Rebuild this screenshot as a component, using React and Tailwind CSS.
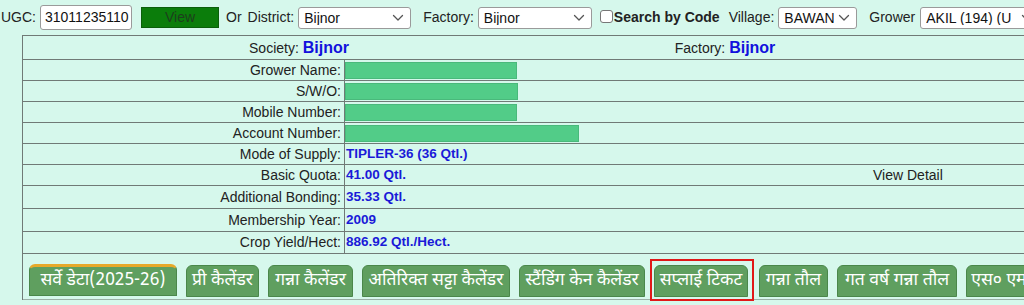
import React from "react";

const Chevron = () => (
  <svg width="12" height="8" viewBox="0 0 12 8" className="shrink-0">
    <path d="M1.5 1.5 L6 6 L10.5 1.5" fill="none" stroke="#555" strokeWidth="1.3" strokeLinecap="round" strokeLinejoin="round" />
  </svg>
);

const Select = ({ w, text }) => (
  <div
    className={`h-[22px] ${w} shrink-0 bg-white border border-[#9a9a9a] rounded-[3px] flex items-center pl-[5px] pr-[6px] gap-1 overflow-hidden`}
  >
    <span className="flex-1 whitespace-nowrap overflow-hidden text-[14px] text-[#111] leading-none">{text}</span>
    <Chevron />
  </div>
);

const rows = [
  { label: "Grower Name:", bar: 172, h: "h-[21px]" },
  { label: "S/W/O:", bar: 173, h: "h-[21px]" },
  { label: "Mobile Number:", bar: 172, h: "h-[21px]" },
  { label: "Account Number:", bar: 234, h: "h-[21px]" },
  { label: "Mode of Supply:", value: "TIPLER-36 (36 Qtl.)", h: "h-[21px]" },
  { label: "Basic Quota:", value: "41.00 Qtl.", extra: "View Detail", h: "h-[21px]" },
  { label: "Additional Bonding:", value: "35.33 Qtl.", h: "h-[23px]" },
  { label: "Membership Year:", value: "2009", h: "h-[23px]" },
  { label: "Crop Yield/Hect:", value: "886.92 Qtl./Hect.", h: "h-[22px]" },
];

const tabs = [
  { t: "सर्वे डेटा(2025-26)", w: "w-[148px]", first: true },
  { t: "प्री कैलेंडर", w: "w-[73px]" },
  { t: "गन्ना कैलेंडर", w: "w-[85px]" },
  { t: "अतिरिक्त सट्टा कैलेंडर", w: "w-[148px]" },
  { t: "स्टैंडिंग केन कैलेंडर", w: "w-[126px]" },
  { t: "सप्लाई टिकट", w: "w-[94px]", hl: true },
  { t: "गन्ना तौल", w: "w-[69px]", extraGap: true },
  { t: "गत वर्ष गन्ना तौल", w: "w-[120px]" },
  { t: "एस० एम० एस०", w: "w-[110px]" },
];

export default function App() {
  return (
    <div
      className="w-[1024px] h-[305px] overflow-hidden bg-[#d6f8ec] text-[#222]"
      style={{ fontFamily: '"Liberation Sans", Arial, sans-serif' }}
    >
      {/* top bar */}
      <div className="h-[35px] flex items-center text-[14px] whitespace-nowrap">
        <span className="ml-[1px] shrink-0">UGC:</span>
        <div className="ml-[4px] shrink-0 w-[92px] h-[25px] bg-white border border-[#9a9a9a] rounded-[3px] flex items-center pl-[4px] text-[14px] text-[#111]">
          31011235110
        </div>
        <div className="ml-[9px] shrink-0 w-[78px] h-[21px] bg-[#0b7d0b] border border-[#0a5f0a] flex items-center justify-center text-[14px] text-[#1d3f1d]">
          View
        </div>
        <span className="ml-[7px] shrink-0">Or</span>
        <span className="ml-[6px] shrink-0">District:</span>
        <div className="ml-[4px] shrink-0"><Select w="w-[113px]" text="Bijnor" /></div>
        <span className="ml-[12px] shrink-0">Factory:</span>
        <div className="ml-[4px] shrink-0"><Select w="w-[114px]" text="Bijnor" /></div>
        <div className="ml-[8px] shrink-0 w-[13px] h-[13px] bg-white border border-[#777] rounded-[3px] -mt-[3px]"></div>
        <span className="ml-[1px] shrink-0 font-bold">Search by Code</span>
        <span className="ml-[9px] shrink-0">Village:</span>
        <div className="ml-[4px] shrink-0"><Select w="w-[79px]" text="BAWANPUR" /></div>
        <span className="ml-[12px] shrink-0">Grower</span>
        <div className="ml-[5px] shrink-0"><Select w="w-[120px]" text="AKIL (194) (U" /></div>
      </div>

      {/* table */}
      <div className="ml-[22px] border-l border-t border-[#707a76]">
        <div className="h-[24px] flex items-center border-b border-[#707a76] text-[14px]">
          <div className="w-[552px] shrink-0 text-center">
            Society: <span className="text-[#1111dd] font-bold text-[16px]">Bijnor</span>
          </div>
          <div className="w-[300px] shrink-0 text-center">
            Factory: <span className="text-[#1111dd] font-bold text-[16px]">Bijnor</span>
          </div>
        </div>
        {rows.map((r, i) => (
          <div key={i} className={`${r.h} flex border-b border-[#707a76] text-[14px]`}>
            <div className="w-[322px] shrink-0 border-r border-[#707a76] flex items-center justify-end pr-[3px]">
              {r.label}
            </div>
            <div className="w-[450px] shrink-0 flex items-center">
              {r.bar ? (
                <div className="h-[17px] bg-[#52cc88] border border-[#49b97b]" style={{ width: r.bar }} />
              ) : (
                <span className="text-[#1a1ad8] font-bold text-[13.5px] pl-[1px]">{r.value}</span>
              )}
            </div>
            <div className="flex-1 flex items-center pl-[78px]">{r.extra || ""}</div>
          </div>
        ))}
        {/* tabs */}
        <div className="h-[46px] pt-[10px] pl-[6px] relative">
          <div
            className="flex items-start gap-[9px] h-[32px] whitespace-nowrap"
            style={{ fontFamily: '"Noto Sans Devanagari", "Noto Sans", "Lohit Devanagari", sans-serif' }}
          >
            {tabs.map((t, i) => (
              <div
                key={i}
                className={`${t.w} shrink-0 relative h-[32px] bg-[#5f9f5f] border border-[#4a874a] rounded-t-[6px] flex items-center justify-center text-white text-[17.5px] ${t.first ? "border-t-[3px] border-t-[#e7a92a]" : "mt-[1px] h-[31px]"} ${t.extraGap ? "ml-[2px]" : ""}`}
              >
                {t.t}
                {t.hl && (
                  <div className="absolute -left-[5px] -top-[7px] w-[104px] h-[42px] border-2 border-[#e01818]" />
                )}
              </div>
            ))}
          </div>
          <div className="mt-[3px] -ml-[6px] border-t border-[#9bb0a6]" />
        </div>
      </div>
    </div>
  );
}
